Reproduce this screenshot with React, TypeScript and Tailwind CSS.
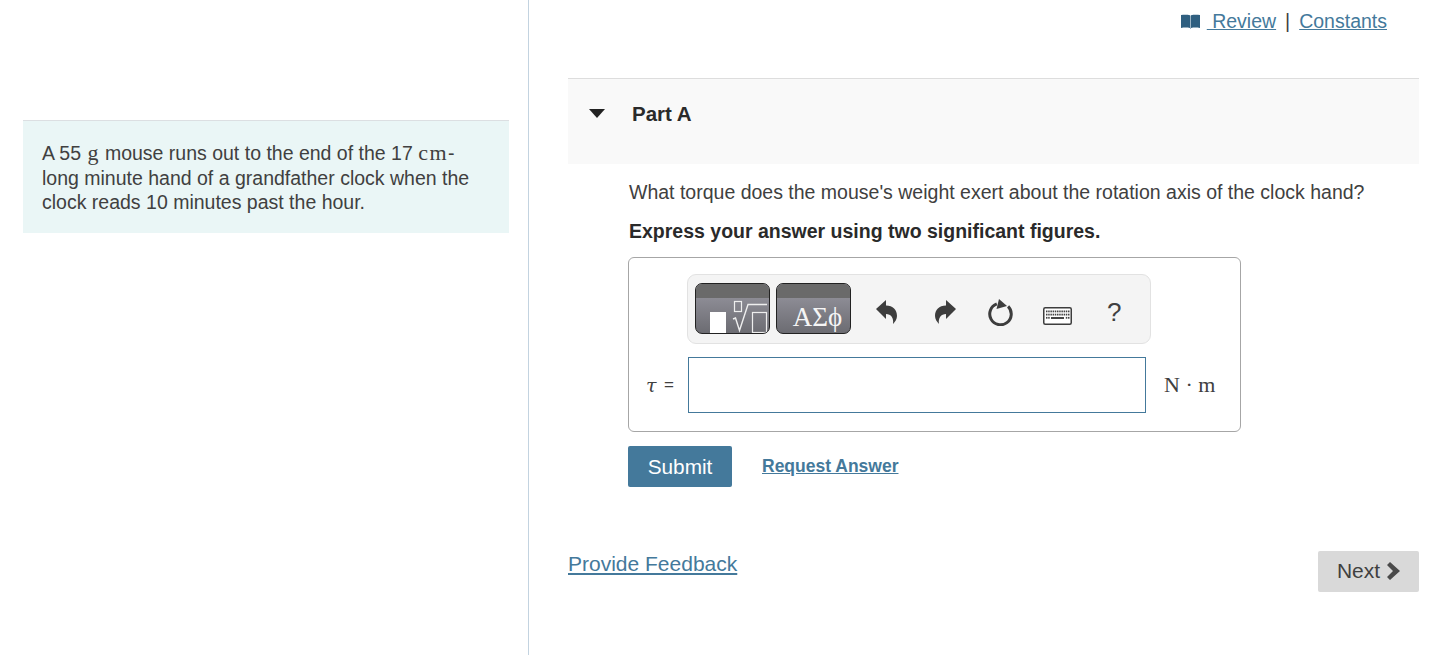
import React from "react";

const serif = "font-['Liberation_Serif',serif]";

function Book() {
  return (
    <svg width="19" height="15" viewBox="0 0 19 15" className="block">
      <path d="M0 1C3 .6 6.500.6 9 1.200V14C6.500 13.400 3 13.400 0 14z" fill="#2f5f80" />
      <path d="M19 1C16 .6 12.500.6 10 1.200V14C12.500 13.400 16 13.400 19 14z" fill="#2f5f80" />
      <path d="M9.500 1.500V15" stroke="#9fb6c6" strokeWidth="1" />
    </svg>
  );
}

function MathButton() {
  return (
    <div className="relative w-[75px] h-[51px] rounded-[7px] border border-[#222] overflow-hidden bg-gradient-to-b from-[#9a99a3] to-[#6c6c72]">
      <div className="h-[14px] bg-[#6a6a6a]" />
      <svg width="73" height="37" viewBox="0 0 73 37" className="absolute left-0 top-[14px]">
        <rect x="14" y="14" width="16" height="21" fill="#fff" />
        <rect x="38.500" y="3.500" width="7" height="10" fill="none" stroke="#eee" strokeWidth="1.200" />
        <path d="M37 21l2.500-1 4 12.500 8.500-26h19" fill="none" stroke="#eee" strokeWidth="1.400" />
        <rect x="56.500" y="14.500" width="14" height="20" fill="none" stroke="#eee" strokeWidth="1.200" />
      </svg>
    </div>
  );
}

function GreekButton() {
  return (
    <div className="relative w-[75px] h-[51px] rounded-[7px] border border-[#222] overflow-hidden bg-gradient-to-b from-[#9a99a3] to-[#6c6c72]">
      <div className="h-[14px] bg-[#6a6a6a]" />
      <div className={`${serif} mt-[4px] text-[#f5f5f5] text-[27px] leading-[30px] text-center pl-[8px] whitespace-nowrap`}>ΑΣϕ</div>
    </div>
  );
}

function Undo({ flip }: { flip?: boolean }) {
  return (
    <svg width="21" height="24" viewBox="0 0 21 24" className={flip ? "-scale-x-100" : ""}>
      <path d="M0 9L10 0v5.500c7 0 11 4.500 11 10.500 0 3-2 6-4 8 1-6-2-10-7-10v5z" fill="#3d3d3d" />
    </svg>
  );
}

function Reset() {
  return (
    <svg width="25" height="27" viewBox="0 0 25 27">
      <path d="M8.800 4.900A10.750 10.750 0 1 0 20.100 7.400" fill="none" stroke="#3d3d3d" strokeWidth="3" />
      <path d="M11 0l8 7-10.500 3z" fill="#3d3d3d" />
    </svg>
  );
}

function Keyboard() {
  const keys: React.ReactElement[] = [];
  for (let r = 0; r < 3; r++) {
    for (let c = 0; c < 11; c++) {
      if (r === 2 && c > 1 && c < 9) continue;
      keys.push(<rect key={`${r}-${c}`} x={3 + c * 2.2} y={3.5 + r * 3.2} width="1.5" height="1.8" fill="#444" />);
    }
  }
  return (
    <svg width="29" height="18" viewBox="0 0 29 18" className="block">
      <rect x="0.750" y="0.750" width="27.500" height="16.500" rx="1.500" fill="#fff" stroke="#3d3d3d" strokeWidth="1.500" />
      {keys}
      <rect x="8" y="10" width="13" height="2" fill="#444" />
    </svg>
  );
}

export default function App() {
  return (
    <div className="flex h-[655px] overflow-hidden bg-white font-['Liberation_Sans',Arial,sans-serif] text-[19.5px] text-[#404040]">
      <div className="w-[529px] shrink-0 border-r border-[#c3d3e0] pl-[23px] pr-[19px] pt-[120px]">
        <div className="h-[113px] border-t border-[#dcdfe2] bg-[#eaf6f6] pl-[19px] pr-[20px] pt-[20px] leading-[24.5px]">
          A 55 <span className={`${serif} text-[22px] mx-[1px]`}>g</span> mouse runs out to the end of the 17 <span className={`${serif} text-[22px] tracking-[1.5px]`}>cm</span>-<br />
          long minute hand of a grandfather clock when the<br />
          clock reads 10 minutes past the hour.
        </div>
      </div>

      <div className="w-[923px] pl-[39px] pr-[33px]">
        <div className="h-[78px] flex justify-end pr-[32px] pt-[9px] leading-[24px] text-[#44799b]">
          <span className="mt-[5px] mr-[7px]"><Book /></span>
          <a className="underline whitespace-pre"> Review</a>
          <span className="text-[#404040] mx-[9px]">|</span>
          <a className="underline">Constants</a>
        </div>

        <div className="h-[86px] border-t border-[#dddddd] bg-[#f9f9f9] flex items-start pt-[23px]">
          <svg width="16" height="9" viewBox="0 0 16 9" className="ml-[21px] mt-[7px]">
            <path d="M0 0h16L8 9z" fill="#222" />
          </svg>
          <span className="ml-[27px] text-[20.5px] font-bold text-[#2a2a2a] leading-[24px]">Part A</span>
        </div>

        <div className="pl-[60px]">
          <p className="ml-[1px] mt-[16px] leading-[24px] whitespace-nowrap">What torque does the mouse's weight exert about the rotation axis of the clock hand?</p>
          <p className="ml-[1px] mt-[15px] leading-[24px] font-bold text-[#2a2a2a]">Express your answer using two significant figures.</p>

          <div className="mt-[14px] w-[613px] h-[175px] border border-[#a6a6a6] rounded-[6px] pt-[16px] pl-[58px]">
            <div className="w-[464px] h-[70px] border border-[#e2e2e2] rounded-[9px] bg-[#f4f4f4] flex items-start pl-[7px]">
              <div className="mt-[8px]"><MathButton /></div>
              <div className="mt-[8px] ml-[6px]"><GreekButton /></div>
              <div className="mt-[25px] ml-[25px]"><Undo /></div>
              <div className="mt-[25px] ml-[38px]"><Undo flip /></div>
              <div className="mt-[24px] ml-[32px]"><Reset /></div>
              <div className="mt-[32px] ml-[30px]"><Keyboard /></div>
              <span className="mt-[22px] ml-[35px] text-[26px] leading-[30px]">?</span>
            </div>
            <div className="flex items-center -ml-[41px] mt-[13px]">
              <span className="font-['DejaVu_Serif',serif] italic text-[19px] w-[18px] mt-[1px]">τ</span>
              <span className="text-[17px] w-[24px]">=</span>
              <div className="w-[458px] h-[56px] border border-[#44799b] bg-white" />
              <span className={`${serif} ml-[18px] mb-[2px] text-[22px] whitespace-nowrap`}>N · m</span>
            </div>
          </div>

          <div className="mt-[14px] flex items-center">
            <button className="w-[104px] h-[41px] rounded-[2px] bg-[#44799b] text-white text-[20.8px]">Submit</button>
            <a className="ml-[30px] text-[17.5px] font-bold text-[#44799b] underline">Request Answer</a>
          </div>
        </div>

        <div className="mt-[64px] flex justify-between items-start">
          <a className="mt-[1px] text-[21px] leading-[24px] text-[#44799b] underline">Provide Feedback</a>
          <button className="w-[101px] h-[41px] rounded-[2px] bg-[#d9d9d9] flex items-center justify-center gap-[7px] text-[#404040] text-[21px]">
            <span className="mb-[2px]">Next</span>
            <svg width="13" height="18" viewBox="0 0 13 18" className="mb-[1px]">
              <path d="M3 0l10 9-10 9-3-3 6-6-6-6z" fill="#4a4a4a" />
            </svg>
          </button>
        </div>
      </div>
    </div>
  );
}
